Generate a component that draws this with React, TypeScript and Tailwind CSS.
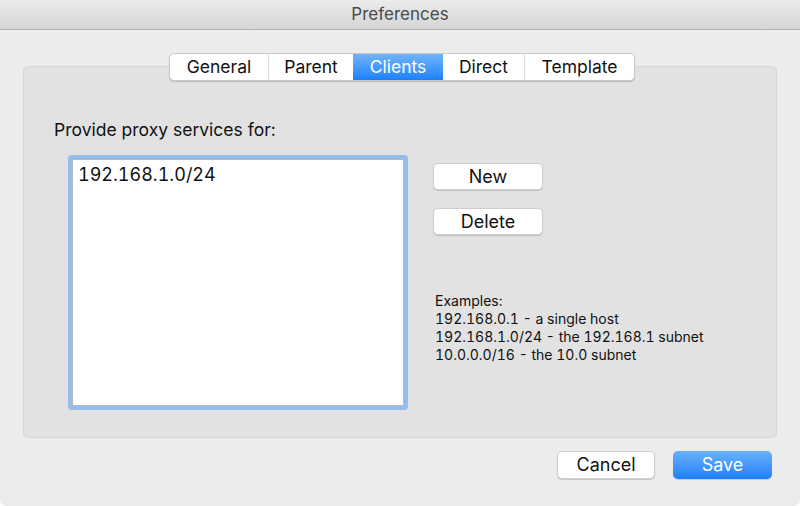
import React from 'react';

const tabs = ['General', 'Parent', 'Clients', 'Direct', 'Template'];
const tabWidths: Record<string, string> = {
  General: 'w-[98px]',
  Parent: 'w-[85px]',
  Clients: 'w-[90px]',
  Direct: 'w-[81px]',
  Template: 'w-[110px]',
};

const font = { fontFamily: 'Inter, "Liberation Sans", sans-serif' };

const App: React.FC = () => {
  const active = 'Clients';

  return (
    <div className="w-[800px] h-[506px] bg-white text-[#1a1a1a]" style={font}>
      <div className="w-full h-full flex flex-col bg-[#ececec] rounded-b-[6px] overflow-hidden">
        {/* title bar */}
        <div className="h-[30px] shrink-0 flex items-center justify-center bg-gradient-to-b from-[#ebebeb] to-[#d5d5d5] border-b border-[#b5b5b5]">
          <span className="text-[17px] text-[#4a4a4a] leading-none">Preferences</span>
        </div>

        {/* tab group */}
        <div className="relative mx-[23px] mt-[36px] h-[372px] bg-[#e2e2e2] border border-[#d6d6d6] rounded-[5px]">
          <div className="absolute left-[145px] -top-[14px] flex h-[28px] rounded-[5px] bg-white border border-[#c9c9c9] shadow-[0_1px_1px_rgba(0,0,0,0.18)] overflow-hidden">
            {tabs.map((t, i) => (
              <div
                key={t}
                className={`${tabWidths[t]} flex items-center justify-center text-[17.5px] ${
                  t === active
                    ? 'bg-gradient-to-b from-[#6db4fb] to-[#1a80fb] text-white'
                    : 'text-[#111]'
                } ${i > 0 && t !== active && tabs[i - 1] !== active ? 'border-l border-[#dcdcdc]' : ''}`}
              >
                {t}
              </div>
            ))}
          </div>

          <div className="pt-[51px] pl-[30px] text-[17.5px] leading-[24px] text-[#111]">
            Provide proxy services for:
          </div>

          <div className="flex pl-[44px] pt-[13px]">
            <div className="w-[340px] h-[255px] rounded-[4px] bg-[#92bdec] p-[4px]">
              <div className="w-full h-full bg-white border border-[#b9b9b9] px-[5px] pt-[4px] text-[18px] tabular-nums leading-[22px] text-[#111]">
                192.168.1.0/24
              </div>
            </div>

            <div className="ml-[25px] pt-[8px] flex flex-col">
              <button className="w-[110px] h-[27px] bg-white rounded-[5px] border border-[#cfcfcf] shadow-[0_1px_1px_rgba(0,0,0,0.15)] text-[18px] text-[#111] leading-none">
                New
              </button>
              <button className="mt-[18px] w-[110px] h-[27px] bg-white rounded-[5px] border border-[#cfcfcf] shadow-[0_1px_1px_rgba(0,0,0,0.15)] text-[18px] text-[#111] leading-none">
                Delete
              </button>
              <div className="mt-[57px] ml-[2px] text-[14px] leading-[18px] tabular-nums text-[#111]">
                <div>Examples:</div>
                <div>192.168.0.1 - a single host</div>
                <div>192.168.1.0/24 - the 192.168.1 subnet</div>
                <div>10.0.0.0/16 - the 10.0 subnet</div>
              </div>
            </div>
          </div>
        </div>

        {/* footer */}
        <div className="flex justify-end gap-[18px] pr-[28px] pt-[13px]">
          <button className="w-[98px] h-[28px] bg-white rounded-[5px] border border-[#cfcfcf] shadow-[0_1px_1px_rgba(0,0,0,0.18)] text-[18px] text-[#111] leading-none">
            Cancel
          </button>
          <button className="w-[99px] h-[28px] rounded-[5px] bg-gradient-to-b from-[#69b1fa] to-[#1a7ffb] shadow-[0_1px_1px_rgba(0,0,0,0.15)] text-[18px] text-white leading-none">
            Save
          </button>
        </div>
      </div>
    </div>
  );
};

export default App;
